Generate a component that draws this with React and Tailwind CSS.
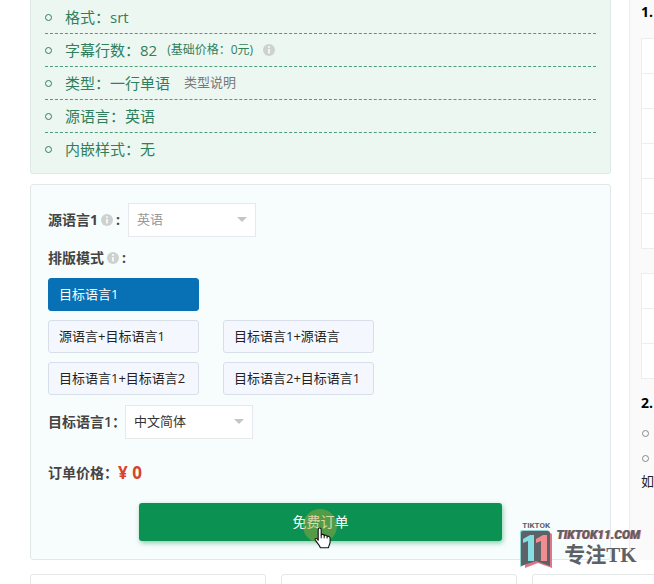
import React, { useState } from "react";

const MODES = [
  "目标语言1",
  "源语言+目标语言1",
  "目标语言1+源语言",
  "目标语言1+目标语言2",
  "目标语言2+目标语言1",
];

const InfoIcon = () => (
  <svg viewBox="0 0 12 12" className="w-3 h-3 shrink-0" aria-hidden="true">
    <circle cx="6" cy="6" r="6" fill="#cdd1d0" />
    <path d="M6 5v4.500" stroke="#fff" strokeWidth="1.500" fill="none" />
    <circle cx="6" cy="3" r="0.9" fill="#fff" />
  </svg>
);

const InfoRow = ({ children, last }) => (
  <li
    className={
      last
        ? "flex items-center h-[33px]"
        : "flex items-center h-[33px] border-b border-dashed border-[#4e9c7b]"
    }
  >
    <span className="w-[7px] h-[7px] rounded-full border border-[#2f7f5c] mr-[13px] shrink-0" />
    {children}
  </li>
);

const SelectBox = ({ id, value, disabled }) => (
  <div className="relative w-32">
    <select
      id={id}
      disabled={disabled}
      className="appearance-none w-full h-[34px] pl-2 pr-6 text-[13px] bg-white border border-[#e6e9eb] text-[#333] disabled:text-[#999] disabled:opacity-100"
    >
      <option>{value}</option>
    </select>
    <svg
      viewBox="0 0 10 5"
      className="absolute right-[9px] top-[14px] w-[10px] h-[5px] pointer-events-none"
      aria-hidden="true"
    >
      <path d="M0 0h10L5 5z" fill="#c4c6c6" />
    </svg>
  </div>
);

const ModeButton = ({ label, active, onClick }) => (
  <button
    type="button"
    aria-pressed={active}
    onClick={onClick}
    className={
      active
        ? "h-[33px] px-[10px] text-left text-[13px] rounded-[3px] border border-[#0871b5] bg-[#0871b5] text-white"
        : "h-[33px] px-[10px] text-left text-[13px] rounded-[3px] border border-[#d9dfea] bg-[#f4f7fd] text-[#222]"
    }
  >
    {label}
  </button>
);

const EmptyTable = ({ rows }) => (
  <table className="w-full border-collapse bg-white">
    <tbody>
      {Array.from({ length: rows }, (_, i) => (
        <tr key={i}>
          <td className="h-[35px] border border-r-0 border-[#ededed]" />
        </tr>
      ))}
    </tbody>
  </table>
);

const Pointer = () => (
  <div className="absolute left-1/2 top-[6px] -ml-[17px] pointer-events-none">
    <div className="w-[34px] h-[34px] rounded-full bg-[#a8a83c]/45" />
    <svg viewBox="0 0 18 22" className="absolute left-[11px] top-[18px] w-[18px] h-[22px]">
      <path
        d="M4.2 13.2V2.7C4.2.4 7.2.4 7.2 2.7V8c.7-1 2.9-.8 3 .6.8-.8 2.8-.5 2.9.9.9-.8 3 0 3 1.600v4c0 2.200-1.300 3-1.600 5.700H6.300C6 18.300 3.600 16.700 1.300 13c-.8-1.500 1.200-2.400 2.900.2z"
        fill="#fff"
        stroke="#111"
        strokeWidth="1.1"
        strokeLinejoin="round"
      />
      <path d="M7.200 8v3.300M10.200 8.600v2.700M13.100 9.500v2" stroke="#111" strokeWidth="1" />
    </svg>
  </div>
);

const Watermark = () => (
  <div className="absolute right-[14px] bottom-4 flex gap-1 pointer-events-none text-[#5d6064]">
    <div className="w-8">
      <p className="text-center text-[8px] leading-[9px] font-bold font-['Liberation_Sans_Narrow','Roboto',sans-serif]">
        TIKTOK
      </p>
      <svg viewBox="0 0 32 38" className="w-8 h-[38px]" aria-label="11">
        <path d="M4 3h26q2 0 2 2v33l-14-5-13 5z" fill="#e0748a" />
        <path d="M2 0h26v34l-12-4-16 7V2q0-2 2-2z" fill="#93d3d6" />
        <path d="M3 1h25q2 0 2 2v33l-14-5-15 5V3q0-2 2-2z" fill="#5c6266" />
        <path d="M3 9l7-4h4v26H8V11l-5 2z" fill="#86dde2" />
        <path d="M16 9l7-4h4v26h-6V11l-5 2z" fill="#f08c92" />
      </svg>
    </div>
    <div className="pt-[7px]">
      <p className="text-xs leading-[14px] font-black italic font-['Liberation_Sans_Narrow','Roboto',sans-serif] [text-shadow:1px_0_#e0808c]">
        TIKTOK11.COM
      </p>
      <p className="pl-2 text-[21px] leading-[26px] font-bold font-['Liberation_Serif','Noto_Sans_CJK_SC',serif]">
        专注TK
      </p>
    </div>
  </div>
);

const App = () => {
  const [mode, setMode] = useState(MODES[0]);

  return (
    <div className="relative h-screen overflow-hidden bg-white text-[#444] font-['Open_Sans','Noto_Sans_CJK_SC',sans-serif]">
      <div className="flex gap-[18px] pl-[30px]">
        <main className="flex-1 min-w-0">
          {/* 字幕信息 */}
          <section className="pt-[1px] pb-[7px] px-[14px] border border-t-0 border-[#e1e9e5] rounded-b-[3px] bg-[#edf7f2]">
            <ul className="text-[15px] text-[#2f7f5c]">
              <InfoRow>格式：srt</InfoRow>
              <InfoRow>
                字幕行数：82
                <span className="ml-[10px] mr-[10px] text-xs">(基础价格：0元)</span>
                <InfoIcon />
              </InfoRow>
              <InfoRow>
                类型：一行单语
                <a href="#type" className="ml-[14px] text-[13px] text-[#777]">
                  类型说明
                </a>
              </InfoRow>
              <InfoRow>源语言：英语</InfoRow>
              <InfoRow last>内嵌样式：无</InfoRow>
            </ul>
          </section>

          {/* 订单表单 */}
          <form className="mt-[10px] px-[17px] py-[18px] border border-[#e2e8ea] rounded-[3px] bg-[#f7fdfd]">
            <div className="flex items-center">
              <label
                htmlFor="source"
                className="flex items-center gap-[3px] w-20 text-sm font-bold"
              >
                源语言1 <InfoIcon />:
              </label>
              <SelectBox id="source" value="英语" disabled />
            </div>

            <div className="flex items-center gap-[3px] h-5 mt-[11px] mb-[10px] text-sm font-bold">
              排版模式 <InfoIcon />:
            </div>
            <div className="grid grid-cols-[151px_151px] gap-x-6 gap-y-[9px]">
              {MODES.map((m, i) => (
                <React.Fragment key={m}>
                  <ModeButton
                    label={m}
                    active={m === mode}
                    onClick={() => setMode(m)}
                  />
                  {i === 0 && <span />}
                </React.Fragment>
              ))}
            </div>

            <div className="flex items-center mt-[10px]">
              <label htmlFor="target" className="w-[77px] text-sm font-semibold whitespace-nowrap">
                目标语言1：
              </label>
              <SelectBox id="target" value="中文简体" />
            </div>

            <div className="flex items-center h-6 mt-[22px] text-sm font-semibold">
              订单价格：
              <strong className="text-[17px] font-bold text-[#d6452a]">¥ 0</strong>
            </div>

            <div className="relative w-2/3 mx-auto mt-[18px]">
              <button
                type="submit"
                onClick={(e) => e.preventDefault()}
                className="block w-full h-[38px] rounded-[3px] bg-[#0b9151] text-sm text-white shadow-[1px_2px_5px_#0b915177]"
              >
                免费订单
              </button>
              <Pointer />
            </div>
          </form>
        </main>

        {/* 右侧说明 */}
        <aside className="w-[25px] shrink-0 pl-[11px] overflow-hidden whitespace-nowrap border-l border-[#ececec] bg-[#fafafa] text-[#222]">
          <h2 className="h-[38px] pt-[2px] text-sm leading-5 font-bold text-black">1.</h2>
          <EmptyTable rows={6} />
          <div className="h-6" />
          <EmptyTable rows={3} />
          <h2 className="mt-3 text-sm leading-6 font-bold text-black">2.</h2>
          <ul className="pt-[6px]">
            <li className="flex items-center h-[25px] pl-[1px]">
              <span className="w-[7px] h-[7px] rounded-full border border-[#888]" />
            </li>
            <li className="flex items-center h-[25px] pl-[1px]">
              <span className="w-[7px] h-[7px] rounded-full border border-[#888]" />
            </li>
          </ul>
          <p className="text-[13px] leading-5">如</p>
        </aside>
      </div>

      <div className="flex gap-[15px] pl-[30px] mt-[14px]">
        <div className="w-[236px] h-20 shrink-0 border border-[#e4e7e8] rounded-[3px]" />
        <div className="w-[236px] h-20 shrink-0 border border-[#e4e7e8] rounded-[3px]" />
        <div className="w-[236px] h-20 shrink-0 border border-[#e4e7e8] rounded-[3px]" />
      </div>

      <Watermark />
    </div>
  );
};

export default App;
